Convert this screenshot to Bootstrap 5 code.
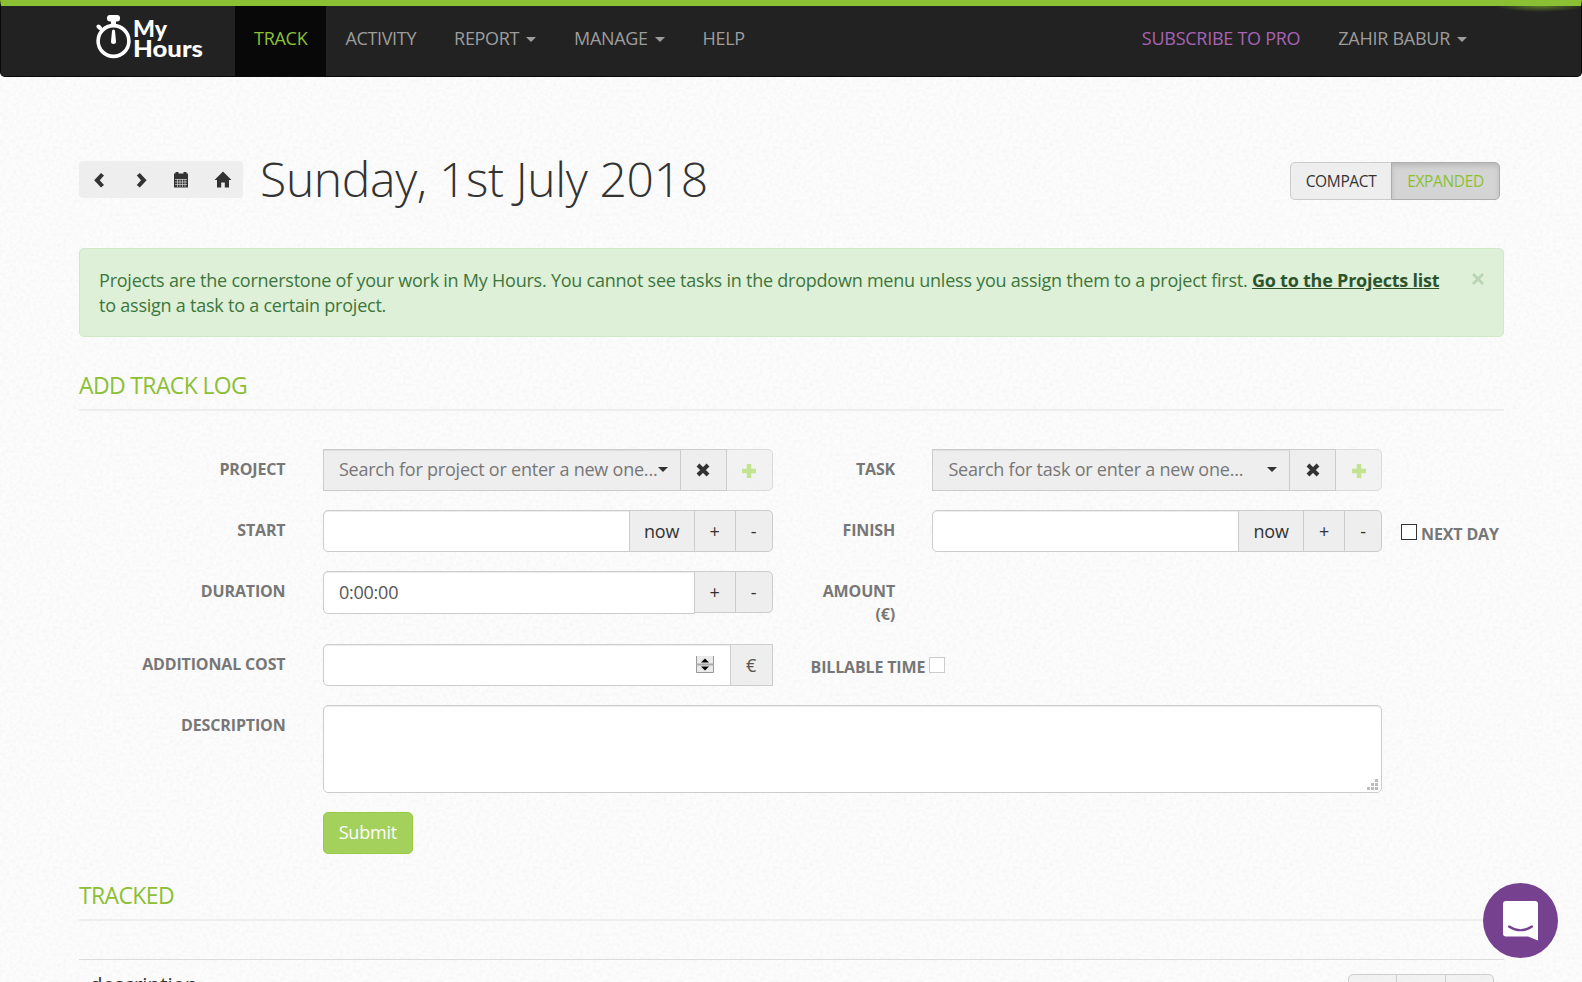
<!DOCTYPE html>
<html lang="en">
<head>
<meta charset="utf-8">
<meta name="viewport" content="width=device-width, initial-scale=1">
<title>My Hours - Track</title>
<link href="https://cdn.jsdelivr.net/npm/bootstrap@5.3.0/dist/css/bootstrap.min.css" rel="stylesheet">
<style>
html, body { height: 100%; overflow: hidden; }
body { font-family: "Open Sans", sans-serif; font-size: 18px; line-height: 25px; letter-spacing: -.22px; color: #333; background-color: #fcfcfc;
  background-image: url("data:image/svg+xml,%3Csvg xmlns='http://www.w3.org/2000/svg' width='240' height='240'%3E%3Cfilter id='n' x='0' y='0' width='1' height='1' color-interpolation-filters='sRGB'%3E%3CfeTurbulence type='fractalNoise' baseFrequency='.3' numOctaves='2' stitchTiles='stitch'/%3E%3CfeColorMatrix values='0 0 0 0 .5 0 0 0 0 .5 0 0 0 0 .5 .1 0 0 0 -.037'/%3E%3C/filter%3E%3Crect width='240' height='240' filter='url(%23n)'/%3E%3C/svg%3E"); }
.page { width: 1463px; margin-left: 60.05px; padding: 0 19px; }
.page .row { --bs-gutter-x: 38px; margin-bottom: 19px; }
.topbar { background: #222; border: 1px solid #080808; border-top: 6px solid #8bc034; border-radius: 0 0 5px 5px; height: 77px; padding: 0; align-items: stretch; position: relative; }
.topbar .page { align-items: stretch; flex-wrap: nowrap; margin-left: 59px; }
.topbar .nav-link { color: #9d9d9d; padding: 19px 19px !important; height: 70px; line-height: 26px; letter-spacing: -.34px; }
.topbar .nav-link.active { background: #080808; color: #8bc034; letter-spacing: -.27px; }
.topbar .account .nav-link { letter-spacing: -.27px; }
.topbar .pro { color: #a863b5; }
.topbar .navbar-brand { padding: 0; margin: 0 31px 0 17px; }
.topbar .account { margin-right: 18px; }
.glow { position: absolute; right: 0; top: 0; width: 90px; height: 7px; background: radial-gradient(ellipse 45px 6px at 55% 0, #8bc03488, transparent); }
.caret { display: inline-block; border: 5px solid transparent; border-top-color: currentColor; border-bottom: 0; vertical-align: 3px; margin-left: 7px; }
.datebar { padding-top: 76px; }
.tools { background: #eee; border-radius: 4px; height: 37px; width: 164px; margin-top: 8px; padding-top: 4px; }
.tools svg { display: block; }
h1 { font-size: 48px; font-weight: 300; line-height: 52px; letter-spacing: -.35px; margin: 0 0 0 17px; }
.viewmode { margin: 9px 4px 0 0; }
.viewmode .btn { font-size: 15.5px; height: 38px; line-height: 22px; padding: 7px 0; width: 102px; flex: none; letter-spacing: -.35px; background: #eee; border: 1px solid #ccc; color: #333; border-radius: 5px; }
.viewmode .btn.active { width: 109px; background: #d4d4d4; border-color: #adadad; color: #8bc034; box-shadow: inset 0 3px 5px rgba(0,0,0,.125); }
.notice { background: #dff0d8; border: 1px solid #d0e9c6; color: #3c763d; border-radius: 5px; padding: 19px 18px 19px 19px; height: 89px; margin-top: 43px; letter-spacing: -.233px; }
.notice a { color: #2b542c; font-weight: 700; }
.section-title { font-size: 23px; line-height: 26px; font-weight: 400; color: #8bc034; margin: 35px 0 0; padding-bottom: 11px; border-bottom: 2px solid #eee; letter-spacing: -.65px; }
.section-title.tracked { margin-top: 28px; }
.lbl { font-size: 16px; font-weight: 700; line-height: 23px; color: #777; text-align: right; padding-top: 9px; letter-spacing: -.15px; }
label.lbl { padding-right: 18.4px; }
.input-group { height: 42px; flex-wrap: nowrap; }
.form-control, .fld { font-size: 18px; line-height: 24px; color: #555; border: 1px solid #ccc; border-radius: 5px; padding: 7px 15px 9px; letter-spacing: -.22px; background: #fff; box-shadow: inset 0 1px 1px rgba(0,0,0,.075); }
.fld { background: #eee; color: #777; border-radius: 0; flex: 1; white-space: nowrap; display: flex; align-items: center; justify-content: space-between; padding-right: 12px; min-width: 0; }
.fld .caret { color: #333; margin: 0; flex: none; }
.input-group .btn { background: #eee; border: 1px solid #ccc; color: #333; font-size: 18px; line-height: 24px; padding: 0; border-radius: 0 5px 5px 0; letter-spacing: -.2px; display: flex; align-items: center; justify-content: center; flex: none; }
.w-now { width: 66px; } .w-plus { width: 42px; } .w-minus { width: 38px; } .w-icon { width: 47px; }
.input-group .w-euro { width: 43px; color: #555; }
.input-group .btn.dim { opacity: .65; width: 47px; padding-top: 2px; }
.tick { display: inline-block; width: 16px; height: 16px; border: 1px solid #ccc; background: #fff; flex: none; }
.tick.dark { border-color: #333; }
textarea.form-control { height: 88px; resize: none; }
.submit { background: #a4d15c; border: 1px solid #97cb45; color: #fff; font-size: 18px; line-height: 24px; height: 42px; width: 90px; padding: 0 0 2px; border-radius: 5px; letter-spacing: -.2px; }
.over { position: absolute; z-index: 6; }
.entry { border-top: 1px solid #ddd; margin-top: 38px; }
.entry .what { font-size: 20.5px; letter-spacing: .05px; padding: 12px 0 0 11px; }
.rowtools { margin-right: 10px; margin-top: 14px; opacity: .7; }
.rowtools span { width: 49.5px; height: 42px; background: #eee; border: 1px solid #bbb; margin-left: -1px; }
.rowtools span:first-child { border-radius: 5px 0 0 0; } .rowtools span:last-child { border-radius: 0 5px 0 0; }
.chat { position: fixed; left: 1483px; top: 883px; }
</style>
</head>
<body>
<nav class="navbar navbar-expand topbar">
  <div class="container-fluid page">
    <a class="navbar-brand" href="#"><svg width="108" height="70" viewBox="96 6 108 70" class="d-block" fill="#fff">
      <circle cx="113.500" cy="41" r="15.400" fill="none" stroke="#fff" stroke-width="3.600"/>
      <rect x="107" y="15" width="13" height="6.500" rx="3"/><rect x="111" y="20" width="5" height="5"/>
      <path d="M98.500 26.500l1.500 1.500" stroke="#fff" stroke-width="4" stroke-linecap="round"/>
      <path d="M112 31a1.500 1.500 0 0 1 3 0l1 10.500a2.500 2.500 0 1 1-5 0z"/>
      <g font-family="Lato, sans-serif" font-weight="900" font-size="22.500" letter-spacing="0"><text x="133" y="37.300" textLength="34" lengthAdjust="spacingAndGlyphs">My</text><text x="133" y="57" textLength="70" lengthAdjust="spacingAndGlyphs">Hours</text></g>
    </svg></a>
    <ul class="navbar-nav">
      <li class="nav-item"><a class="nav-link active" href="#">TRACK</a></li>
      <li class="nav-item"><a class="nav-link" href="#">ACTIVITY</a></li>
      <li class="nav-item"><a class="nav-link" href="#">REPORT<i class="caret"></i></a></li>
      <li class="nav-item"><a class="nav-link" href="#">MANAGE<i class="caret"></i></a></li>
      <li class="nav-item"><a class="nav-link" href="#">HELP</a></li>
    </ul>
    <ul class="navbar-nav ms-auto account">
      <li class="nav-item"><a class="nav-link pro" href="#">SUBSCRIBE TO PRO</a></li>
      <li class="nav-item"><a class="nav-link" href="#">ZAHIR BABUR<i class="caret"></i></a></li>
    </ul>
  </div>
  <div class="glow"></div>
</nav>

<main class="container-fluid page">
  <div class="d-flex align-items-start datebar">
    <div class="tools">
      <svg width="164" height="30" viewBox="79 165 164 30" fill="#333">
        <path d="M101 173l3 2.500-4.200 4.700 4.200 4.700-3 2.500-6.800-7.200z"/>
        <path d="M139.800 173l-3 2.500 4.200 4.700-4.200 4.700 3 2.500 6.800-7.200z"/>
        <path d="M174 173.500h1.500v-1.500h3v1.500h5v-1.500h3v1.500h1.500v3.500h-14z"/><path d="M174 177h14v10.500h-14z"/>
        <path d="M175 179.500h12M175 182h12M175 184.500h12M177.500 179v8M180 179v8M182.500 179v8M185 179v8" stroke="#eee" stroke-width=".6"/>
        <path d="M223 171.500l8.500 8.500h-2.500v7.500h-4.200v-5h-3.600v5h-4.200v-7.500h-2.500z"/>
      </svg>
    </div>
    <h1>Sunday, 1st July 2018</h1>
    <div class="btn-group viewmode ms-auto">
      <button class="btn">COMPACT</button><button class="btn active">EXPANDED</button>
    </div>
  </div>

  <div class="notice d-flex">
    <div class="text-nowrap">Projects are the cornerstone of your work in My Hours. You cannot see tasks in the dropdown menu unless you assign them to a project first. <a href="#">Go to the Projects list</a><br>to assign a task to a certain project.</div>
    <svg class="ms-auto mt-1" width="14" height="14" viewBox="0 0 14 14"><path d="M2 2l10 10M12 2l-10 10" stroke="#b9d4b3" stroke-width="2.800"/></svg>
  </div>

  <h2 class="section-title">ADD TRACK LOG</h2>

  <form style="padding-top:38px">
    <div class="row">
      <label class="col-2 lbl">PROJECT</label>
      <div class="col-4"><div class="input-group">
        <div class="fld">Search for project or enter a new one...<i class="caret"></i></div>
        <button type="button" class="btn w-icon"><svg width="14" height="14" viewBox="0 0 14 14"><path d="M2 2l10 10M12 2L2 12" stroke="#333" stroke-width="4"/></svg></button>
        <button type="button" class="btn w-icon dim"><svg width="14" height="14" viewBox="0 0 14 14"><path d="M7 0v14M0 7h14" stroke="#a4d85c" stroke-width="4.500"/></svg></button>
      </div></div>
      <label class="col-1 lbl">TASK</label>
      <div class="col-4"><div class="input-group">
        <div class="fld">Search for task or enter a new one...<i class="caret"></i></div>
        <button type="button" class="btn w-icon"><svg width="14" height="14" viewBox="0 0 14 14"><path d="M2 2l10 10M12 2L2 12" stroke="#333" stroke-width="4"/></svg></button>
        <button type="button" class="btn w-icon dim"><svg width="14" height="14" viewBox="0 0 14 14"><path d="M7 0v14M0 7h14" stroke="#a4d85c" stroke-width="4.500"/></svg></button>
      </div></div>
    </div>
    <div class="row">
      <label class="col-2 lbl">START</label>
      <div class="col-4"><div class="input-group"><input class="form-control"><button type="button" class="btn w-now">now</button><button type="button" class="btn w-plus">+</button><button type="button" class="btn w-minus">-</button></div></div>
      <label class="col-1 lbl">FINISH</label>
      <div class="col-4"><div class="input-group"><input class="form-control"><button type="button" class="btn w-now">now</button><button type="button" class="btn w-plus">+</button><button type="button" class="btn w-minus">-</button></div></div>
      <div class="col-1 lbl p-0 d-flex text-nowrap"><i class="tick dark" style="margin:14px 4px 0 0"></i><span style="margin-top:13px">NEXT DAY</span></div>
    </div>
    <div class="row">
      <label class="col-2 lbl">DURATION</label>
      <div class="col-4"><div class="input-group"><input class="form-control" value="0:00:00" style="height:43px"><button type="button" class="btn w-plus">+</button><button type="button" class="btn w-minus">-</button></div></div>
      <label class="col-1 lbl" style="margin-bottom:-1px">AMOUNT (€)</label>
    </div>
    <div class="row">
      <label class="col-2 lbl">ADDITIONAL COST</label>
      <div class="col-4"><div class="input-group position-relative"><input class="form-control"><button type="button" class="btn w-euro">€</button>
        <svg class="over" width="18" height="17" viewBox="0 0 18 17" style="right:59px;top:12px"><path d="M0 0h18v17H0z" fill="#eaeaea"/><path d="M.5 0v16.500h17V0" fill="none" stroke="#999"/><path d="M0 8.500h18" stroke="#aaa" stroke-width="2"/><path d="M5 6.500h8L9 2.500zM5 10.500h8l-4 4z" fill="#000"/></svg>
      </div></div>
      <div class="col-2 lbl d-flex text-nowrap pt-0"><span style="margin-top:12px">BILLABLE TIME</span><i class="tick" style="margin:13px 0 0 4px"></i></div>
    </div>
    <div class="row">
      <label class="col-2 lbl">DESCRIPTION</label>
      <div class="col-9 position-relative"><textarea class="form-control"></textarea>
        <svg class="over" width="11" height="11" viewBox="0 0 11 11" fill="#bbb" style="right:23px;bottom:3px"><path d="M8 0h3v3H8zM4 4h3v3H4zM8 4h3v3H8zM0 8h3v3H0zM4 8h3v3H4zM8 8h3v3H8z"/></svg>
      </div>
    </div>
    <div class="row"><div class="col-4 offset-2"><button type="button" class="btn submit">Submit</button></div></div>
  </form>

  <h2 class="section-title tracked">TRACKED</h2>
  <div class="entry d-flex justify-content-between align-items-start">
    <div class="what">description</div>
    <div class="rowtools d-flex"><span></span><span></span><span></span></div>
  </div>
</main>

<svg class="chat" width="75" height="75" viewBox="0 0 75 75"><circle cx="37.500" cy="37.500" r="37.500" fill="#764290"/><path d="M23 18h29a3 3 0 0 1 3 3v36.500l-10-4H23a3 3 0 0 1-3-3V21a3 3 0 0 1 3-3z" fill="#fff"/><path d="M26 43.500q11.500 7.500 23 0" fill="none" stroke="#764290" stroke-width="2.200" stroke-linecap="round"/></svg>
<script src="https://cdn.jsdelivr.net/npm/bootstrap@5.3.0/dist/js/bootstrap.bundle.min.js"></script>
</body>
</html>
